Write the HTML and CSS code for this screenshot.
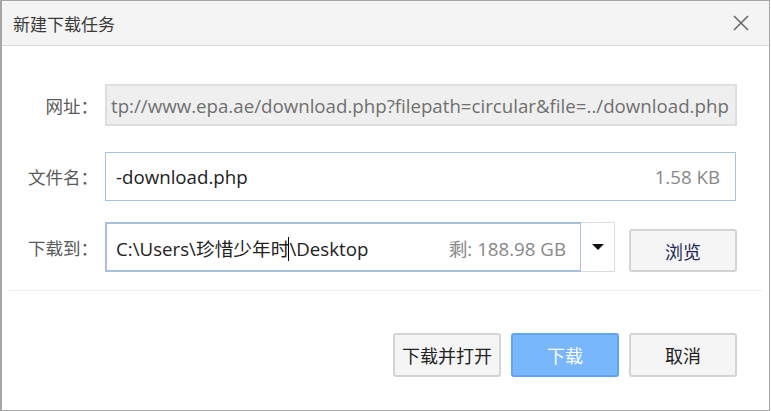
FILE: index.html
```html
<!DOCTYPE html>
<html lang="zh">
<head>
<meta charset="utf-8">
<link rel="stylesheet" href="styles.css">
</head>
<body>
<div class="dialog">
  <div class="titlebar">
    <span class="title">新建下载任务</span>
    <svg class="close" width="16" height="16" viewBox="0 0 16 16"><path d="M1 1L15 15M15 1L1 15" stroke="#6b6b6b" stroke-width="1.6" fill="none"/></svg>
  </div>
  <div class="form">
    <div class="row row-url">
      <label class="label">网址：</label>
      <div class="field field-url"><span class="url">tp://www.epa.ae/download.php?filepath=circular&amp;file=../download.php</span></div>
    </div>
    <div class="row row-name">
      <label class="label">文件名：</label>
      <div class="field field-name"><span class="value">-download.php</span><span class="meta">1.58 KB</span></div>
    </div>
    <div class="row row-path">
      <label class="label">下载到：</label>
      <div class="field field-path"><span class="value">C:\Users\珍惜少年时<span class="caret"></span>\Desktop</span><span class="meta">剩: 188.98 GB</span></div>
      <div class="drop"><span class="tri"></span></div>
      <button class="btn btn-browse">浏览</button>
    </div>
  </div>
  <div class="sep"></div>
  <div class="actions">
    <button class="btn">下载并打开</button>
    <button class="btn btn-primary">下载</button>
    <button class="btn">取消</button>
  </div>
</div>
</body>
</html>
```
FILE: styles.css
```css
* { box-sizing: border-box; }
html, body { margin: 0; padding: 0; background: #fff; }
body { font-family: "Open Sans", "Noto Sans CJK SC", sans-serif; color: #333; }
.dialog {
  width: 770px; height: 411px;
  border: 1px solid #a6a6a6; border-left-width: 2px;
  background: #fff;
  display: flex; flex-direction: column;
}
.titlebar {
  height: 45px; flex: none;
  background: #f4f4f4; border-bottom: 1px solid #dcdcdc;
  display: flex; align-items: center; justify-content: space-between;
  padding: 0 20px 0 11px;
}
.title { font-family: "Noto Sans CJK SC", sans-serif; font-size: 17px; color: #3a3a3a; }
.close { display: block; margin-top: -1px; }
.form { padding: 38px 32px 0 0; }
.row { display: flex; align-items: center; }
.label {
  width: 96px; flex: none; text-align: right; margin-right: 7px;
  font-family: "Noto Sans CJK SC", sans-serif; font-size: 17.5px; color: #5a5a5a;
}
.field {
  display: flex; align-items: center; justify-content: space-between;
  font-size: 18.7px; overflow: hidden; white-space: nowrap;
}
.field-url {
  width: 632px; height: 42px; background: #efefef; border: 2px solid #dedede;
  padding: 0 4px; color: #707070;
}
.row-name { margin-top: 26px; }
.field-name {
  width: 631px; height: 49px; border: 1px solid #a9c1dd; padding: 0 15px 0 10px;
}
.value { color: #222; }
.meta { color: #888; }
.row-path { margin-top: 21px; }
.field-path {
  width: 476px; height: 50px; border: 1px solid #a9c1dd; border-width: 2px 1px 2px 2px; padding: 0 14px 0 9px;
}
.caret { display: inline-block; width: 1px; height: 24px; background: #000; vertical-align: -5px; margin-left: -1px; }
.drop {
  width: 34px; height: 50px; border: 1px solid #dcdcdc; border-left: none;
  display: flex; align-items: center; justify-content: center;
}
.tri { width: 0; height: 0; border-left: 6px solid transparent; border-right: 6px solid transparent; border-top: 6px solid #111; }
.btn {
  font-family: "Noto Sans CJK SC", sans-serif; font-size: 18px; color: #222;
  background: #f5f5f5; border: 2px solid #d4d4d4; border-radius: 3px;
  width: 108px; height: 44px; padding: 0; margin: 0;
}
.btn-browse { margin-left: 14px; height: 43px; align-self: flex-end; color: #1e2a55; }
.sep { height: 1px; background: #ececec; margin: 18px 7px 0 7px; }
.actions { display: flex; justify-content: flex-end; gap: 10px; padding: 42px 32px 0 0; }
.btn-primary { background: #79b7fc; border-color: #62a4f2; color: #fff; }
```
